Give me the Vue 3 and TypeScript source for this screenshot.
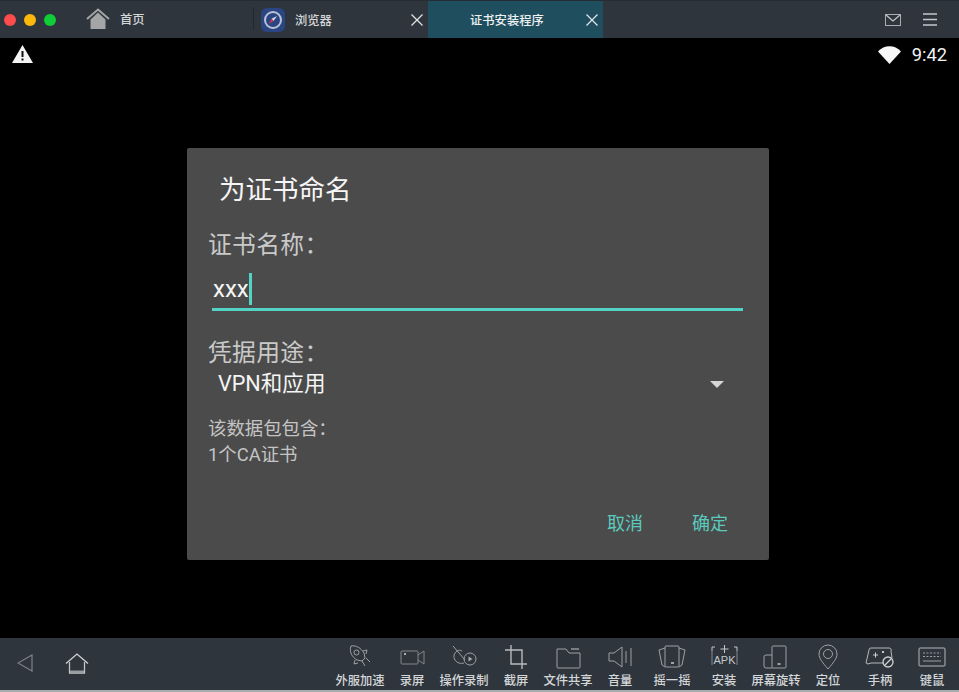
<script setup lang="ts">
const tools = [
  { label: '外服加速', id: 'rocket' },
  { label: '录屏', id: 'video' },
  { label: '操作录制', id: 'record' },
  { label: '截屏', id: 'crop' },
  { label: '文件共享', id: 'folder' },
  { label: '音量', id: 'volume' },
  { label: '摇一摇', id: 'shake' },
  { label: '安装', id: 'apk' },
  { label: '屏幕旋转', id: 'rotate' },
  { label: '定位', id: 'pin' },
  { label: '手柄', id: 'pad' },
  { label: '键鼠', id: 'keyboard' }
]
</script>

<template>
  <div class="app">
    <header class="topbar">
      <div class="lights">
        <span class="light red"></span>
        <span class="light yellow"></span>
        <span class="light green"></span>
      </div>
      <div class="tab home-tab">
        <svg class="home-icon" width="24" height="22" viewBox="0 0 24 22">
          <path d="M4.500 11.500 12 4.500l7.500 7V21h-15z" fill="#a3a5a7" />
          <path d="M1 11 12 1.500 23 11" fill="none" stroke="#a3a5a7" stroke-width="2" />
        </svg>
        <span class="tab-text">首页</span>
      </div>
      <div class="tab browser-tab">
        <svg width="24" height="24" viewBox="0 0 24 24">
          <rect width="24" height="24" rx="6" fill="#2b4583" />
          <circle cx="12" cy="12" r="8" fill="none" stroke="#b8c2d6" stroke-width="2" />
          <path d="M16 8l-5.500 2.800L12.500 13z" fill="#d8dce6" />
          <path d="M8 16l2.500-5.200 2 2.200z" fill="#d8364a" />
        </svg>
        <span class="tab-text browser-text">浏览器</span>
        <svg class="close" width="12" height="12" viewBox="0 0 12 12">
          <path d="M.5.500l11 11M11.500.500l-11 11" stroke="#e4e6e8" stroke-width="1.200" fill="none" />
        </svg>
      </div>
      <div class="tab active-tab">
        <span class="tab-text active-text">证书安装程序</span>
        <svg class="close" width="12" height="12" viewBox="0 0 12 12">
          <path d="M.5.500l11 11M11.500.500l-11 11" stroke="#e4e6e8" stroke-width="1.200" fill="none" />
        </svg>
      </div>
      <div class="top-actions">
        <svg width="16" height="12" viewBox="0 0 16 12">
          <rect x=".5" y=".5" width="15" height="11" fill="none" stroke="#a9adb1" />
          <path d="M1 1l7 6 7-6" fill="none" stroke="#c5c8ca" stroke-width="1.200" />
        </svg>
        <svg width="14" height="13" viewBox="0 0 14 13">
          <path d="M0 1h14M0 6.500h14M0 12h14" stroke="#c5c8ca" stroke-width="1.400" />
        </svg>
      </div>
    </header>

    <main class="screen">
      <div class="status">
        <svg width="21" height="18" viewBox="0 0 21 18">
          <path d="M10.500 0 21 18H0z" fill="#f4f4f4" />
          <path d="M9.500 6h2v6h-2zM9.500 13.500h2v2h-2z" fill="#111" />
        </svg>
        <div class="status-right">
          <svg width="23" height="18" viewBox="0 0 23 18">
            <path d="M0 5.500C6-1.500 17-1.500 23 5.500L11.500 18z" fill="#f7f7f7" />
          </svg>
          <span class="clock">9:42</span>
        </div>
      </div>

      <section class="dialog">
        <h1 class="title">为证书命名</h1>
        <div class="label">证书名称：</div>
        <div class="input">
          <span class="input-text">xxx</span>
          <span class="caret"></span>
        </div>
        <div class="label purpose">凭据用途：</div>
        <div class="select">
          <span>VPN和应用</span>
          <span class="arrow"></span>
        </div>
        <div class="info">该数据包包含：</div>
        <div class="info">1个CA证书</div>
        <div class="buttons">
          <span class="btn">取消</span>
          <span class="btn">确定</span>
        </div>
      </section>
    </main>

    <footer class="bottombar">
      <div class="nav">
        <svg width="16" height="18" viewBox="0 0 16 18">
          <path d="M15 1v16L1 9z" fill="none" stroke="#7d8287" stroke-width="1.200" />
        </svg>
        <svg width="24" height="21" viewBox="0 0 24 21">
          <path d="M1 10.500 12 1l11 9.500" fill="none" stroke="#d0d2d4" stroke-width="1.300" />
          <path d="M4.500 9v11h15V9" fill="none" stroke="#c0c3c5" stroke-width="1.300" />
          <path d="M5 18.500h14" stroke="#9a9da0" stroke-width="2" />
        </svg>
      </div>
      <div class="tools">
        <div v-for="t in tools" :key="t.id" class="tool">
          <svg class="tool-icon" width="30" height="26" viewBox="0 0 30 26" fill="none" stroke="#9da1a5" stroke-width="1">
            <template v-if="t.id === 'rocket'">
              <path d="M6 2c5-1 10 2 13 7l1 5-3 3-5-1C7 13 4 8 6 2z" />
              <circle cx="11.500" cy="8.500" r="2.500" />
              <path d="M18 7l4-1-1 4M10 16l-1 4 4-1M17 17l3 5M21 14l4 4" />
            </template>
            <template v-else-if="t.id === 'video'">
              <rect x="4" y="7" width="17" height="13" rx="1" stroke="#82878c" />
              <path d="M21 11l6-4v13l-6-4" stroke="#82878c" />
              <rect x="7" y="9" width="2" height="2" fill="#a9adb1" stroke="none" />
            </template>
            <template v-else-if="t.id === 'record'">
              <path d="M4 2l12 14M8 7c-3 2-4 6-2 9s6 4 9 3" />
              <path d="M8 7c2-1 3-1 5 0" />
              <circle cx="21" cy="15" r="6" />
              <path d="M19.500 12.500v5l4-2.500z" fill="#a9adb1" stroke="none" />
            </template>
            <template v-else-if="t.id === 'crop'">
              <path d="M10 1v19h16M4 6h17v19" stroke="#b8bbbe" stroke-width="1.400" />
            </template>
            <template v-else-if="t.id === 'folder'">
              <path d="M4 5h9l3 4h11v14a1 1 0 0 1-1 1H5a1 1 0 0 1-1-1z" />
              <path d="M18 5h8" stroke="#c5c8ca" />
            </template>
            <template v-else-if="t.id === 'volume'">
              <path d="M4 9h5l8-6v20l-8-6H4zM21 7v12M26 4v18" />
            </template>
            <template v-else-if="t.id === 'shake'">
              <rect x="8" y="2" width="14" height="21" rx="1" />
              <path d="M8 4 2 6l3 15 3 2M22 4l6 2-3 15-3 2" />
              <path d="M14 19h3" stroke-width="1.500" stroke="#c5c8ca" />
            </template>
            <template v-else-if="t.id === 'apk'">
              <path d="M3 7V3h3M28 7V3h-3M15.500 1v8M11.500 5h8" stroke="#c5c8ca" />
              <text x="15.500" y="20" class="apk">APK</text>
              <path d="M3 7v14M28 7v14" stroke-width=".8" />
            </template>
            <template v-else-if="t.id === 'rotate'">
              <rect x="11" y="2" width="14" height="22" rx="1" />
              <path d="M11 11H5a2 2 0 0 0-2 2v9a2 2 0 0 0 2 2h6" />
              <path d="M16.500 20h3" stroke-width="1.500" stroke="#c5c8ca" />
            </template>
            <template v-else-if="t.id === 'pin'">
              <path d="M15 25C9 18 6 14 6 10a9 9 0 0 1 18 0c0 4-3 8-9 15z" />
              <circle cx="15" cy="10" r="4.500" />
            </template>
            <template v-else-if="t.id === 'pad'">
              <path d="M4 6a2 2 0 0 1 2-2h18a2 2 0 0 1 2 3l1 7M19 19H6l-3 1-2-1 3-13" stroke="#b5b8bb" />
              <path d="M8 11h5M10.500 8.500v5" stroke="#d0d2d4" />
              <rect x="17" y="7" width="2" height="2" fill="#c5c8ca" stroke="none" />
              <circle cx="23" cy="18" r="5" stroke="#d0d2d4" stroke-width="1.300" />
              <path d="M20 21l6-6" stroke="#d0d2d4" stroke-width="1.300" />
            </template>
            <template v-else>
              <rect x="2" y="4" width="26" height="18" rx="1" stroke="#b5b8bb" />
              <path d="M6 9h18M6 12.500h18" stroke-dasharray="2 1.500" />
              <path d="M6 17h18" />
            </template>
          </svg>
          <span class="tool-label">{{ t.label }}</span>
        </div>
      </div>
    </footer>
  </div>
</template>

<style scoped>
.app {
  width: 959px;
  height: 692px;
  display: flex;
  flex-direction: column;
  overflow: hidden;
  background: #000;
  font-family: "Noto Sans CJK SC", "Liberation Sans", sans-serif;
}
.topbar {
  flex: 0 0 38px;
  display: flex;
  align-items: stretch;
  background: #2e353d;
  border-top: 1px solid #262c33;
  box-sizing: border-box;
}
.lights {
  flex: 0 0 86px;
  display: flex;
  align-items: center;
  gap: 8px;
  padding-left: 4px;
  box-sizing: border-box;
}
.light {
  width: 12px;
  height: 12px;
  border-radius: 50%;
}
.red { background: #fc4c4c; }
.yellow { background: #fdb80c; }
.green { background: #0fce37; }
.tab {
  display: flex;
  align-items: center;
}
.home-tab {
  flex: 0 0 168px;
  gap: 10px;
  border-right: 1px solid #23282e;
  margin: 6px 0 8px;
  box-sizing: border-box;
}
.browser-tab {
  flex: 0 0 174px;
  padding-left: 7px;
  box-sizing: border-box;
}
.tab-text {
  font-size: 12.300px;
  font-weight: 500;
  color: #d4d6d8;
  white-space: nowrap;
}
.browser-text {
  margin-left: 10px;
}
.close {
  margin-left: auto;
}
.browser-tab .close {
  margin-right: 5px;
}
.active-tab {
  flex: 0 0 175px;
  background: #1f4e5f;
  padding: 0 5px 0 42px;
  box-sizing: border-box;
}
.active-text {
  color: #eef1f2;
}
.top-actions {
  flex: 1;
  display: flex;
  align-items: center;
  justify-content: flex-end;
  gap: 22px;
  padding-right: 22px;
}
.screen {
  flex: 1;
  display: flex;
  flex-direction: column;
  min-height: 0;
  background: #000;
}
.status {
  flex: 0 0 110px;
  display: flex;
  align-items: flex-start;
  justify-content: space-between;
  padding: 7px 12px 0;
  box-sizing: border-box;
}
.status-right {
  display: flex;
  align-items: center;
  gap: 11px;
}
.clock {
  font-family: Roboto, "Liberation Sans", sans-serif;
  font-size: 18.300px;
  font-weight: 400;
  line-height: 20px;
  color: #f2f2f2;
}
.dialog {
  width: 582px;
  height: 412px;
  margin-left: 187px;
  background: #4b4b4b;
  border-radius: 2px;
  padding: 24px 25px 0 21px;
  box-sizing: border-box;
  display: flex;
  flex-direction: column;
}
.title {
  margin: 0 0 0 11px;
  font-size: 26.500px;
  font-weight: 400;
  line-height: 32px;
  color: #f5f5f5;
}
.label {
  margin-top: 25px;
  font-size: 23.800px;
  line-height: 28px;
  color: #c9c9c9;
  letter-spacing: 0.300px;
}
.input {
  margin: 15px 1px 0 4px;
  display: flex;
  align-items: center;
  box-sizing: content-box;
  height: 33px;
  padding-bottom: 3px;
  border-bottom: 3px solid #52d3c5;
}
.input-text {
  margin-left: 1px;
  font-family: Roboto, "Liberation Sans", sans-serif;
  font-size: 24px;
  line-height: 32px;
  color: #f5f5f5;
}
.caret {
  width: 3px;
  height: 32px;
  background: #52d3c5;
}
.purpose {
  margin-top: 26px;
}
.select {
  margin: 5px 20px 0 10px;
  display: flex;
  align-items: center;
  justify-content: space-between;
  font-family: Roboto, "Noto Sans CJK SC", sans-serif;
  font-size: 21.600px;
  line-height: 28px;
  color: #f5f5f5;
}
.arrow {
  width: 0;
  height: 0;
  border-left: 7px solid transparent;
  border-right: 7px solid transparent;
  border-top: 7px solid #d6d6d6;
}
.info {
  font-family: Roboto, "Noto Sans CJK SC", sans-serif;
  font-size: 18.400px;
  line-height: 26px;
  color: #c4c4c4;
}
.select + .info {
  margin-top: 18px;
}
.buttons {
  margin-top: auto;
  margin-bottom: 24px;
  padding-right: 16px;
  display: flex;
  justify-content: flex-end;
  gap: 49px;
}
.btn {
  font-size: 18px;
  line-height: 28px;
  color: #5acabd;
}
.bottombar {
  flex: 0 0 54px;
  display: flex;
  align-items: stretch;
  background: #2e353d;
  border-bottom: 2px solid #a8abae;
  box-sizing: border-box;
}
.nav {
  flex: 0 0 334px;
  display: flex;
  align-items: center;
  gap: 32px;
  padding: 0 0 2px 17px;
  box-sizing: border-box;
}
.tools {
  flex: 1;
  display: flex;
}
.tool {
  flex: 0 0 52px;
  display: flex;
  flex-direction: column;
  align-items: center;
  padding-top: 6px;
  box-sizing: border-box;
}
.tool-icon {
  flex: 0 0 26px;
}
.tool-label {
  margin-top: 2px;
  font-size: 12.300px;
  font-weight: 500;
  line-height: 16px;
  color: #d4d6d8;
  white-space: nowrap;
}
.apk {
  font-family: "Liberation Sans", sans-serif;
  font-size: 11px;
  fill: #c5c8ca;
  stroke: none;
  text-anchor: middle;
}
</style>
